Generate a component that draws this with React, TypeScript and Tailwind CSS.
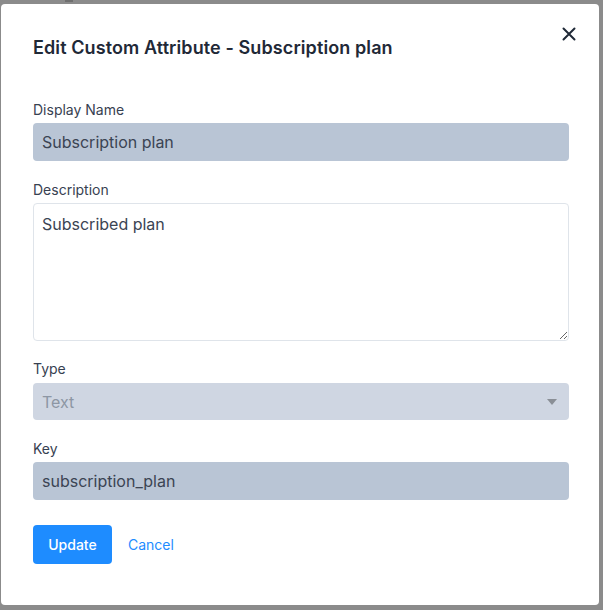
import React from "react";

export default function App() {
  return (
    <div className="w-[603px] h-[610px] bg-[#8b8b8b] relative overflow-hidden" style={{ fontFamily: "Inter, 'Noto Sans', sans-serif" }}>
      <div className="absolute left-[65px] top-0 w-[8px] h-[2px] bg-[#6f6f6f]" />
      <div className="relative ml-[1px] mt-[4px] w-[598px] h-[601px] rounded-[4px] bg-white pl-[32px] pr-[30px] pt-[32px]">
        <button className="absolute right-[22px] top-[22px] w-[16px] h-[16px] flex items-center justify-center text-[#1f2937]">
          <svg width="14" height="14" viewBox="0 0 14 14" fill="none" stroke="currentColor" strokeWidth="2" strokeLinecap="round">
            <path d="M1.5 1.5 L12.5 12.5 M12.5 1.5 L1.5 12.5" />
          </svg>
        </button>
        <h2 className="text-[18px] leading-[24px] font-semibold tracking-[0.1px] text-[#1f2937]">Edit Custom Attribute - Subscription plan</h2>

        <label className="block mt-[40px] text-[14px] leading-[20px] text-[#374151]">Display Name</label>
        <div className="mt-[3px] h-[38px] rounded-[4px] bg-[#b9c5d5] flex items-center px-[9px] text-[16px] text-[#3b4453]">Subscription plan</div>

        <label className="block mt-[19px] text-[14px] leading-[20px] text-[#374151]">Description</label>
        <textarea
          className="block mt-[3px] w-full h-[138px] rounded-[4px] border border-[#dfe4ea] bg-white px-[8px] pt-[9px] pb-[10px] text-[16px] leading-[22px] text-[#3b4453] outline-none"
          defaultValue="Subscribed plan"
        />

        <label className="block mt-[18px] text-[14px] leading-[20px] text-[#374151]">Type</label>
        <div className="mt-[4px] h-[37px] rounded-[4px] bg-[#cfd6e2] flex items-center justify-between px-[9px] text-[16px] text-[#8d96a4]">
          <span>Text</span>
          <svg width="10" height="6" viewBox="0 0 10 6" className="mr-[3px]">
            <path d="M0 0 L10 0 L5 6 Z" fill="#8a8f96" />
          </svg>
        </div>

        <label className="block mt-[19px] text-[14px] leading-[20px] text-[#374151]">Key</label>
        <div className="mt-[3px] h-[38px] rounded-[4px] bg-[#b9c5d5] flex items-center px-[9px] text-[16px] text-[#3b4453]">subscription_plan</div>

        <div className="mt-[25px] flex items-center gap-[16px]">
          <button className="h-[39px] w-[79px] rounded-[4px] bg-[#1e8cff] text-white text-[14px] font-medium">Update</button>
          <button className="text-[14px] text-[#1e8cff]">Cancel</button>
        </div>
      </div>
    </div>
  );
}
